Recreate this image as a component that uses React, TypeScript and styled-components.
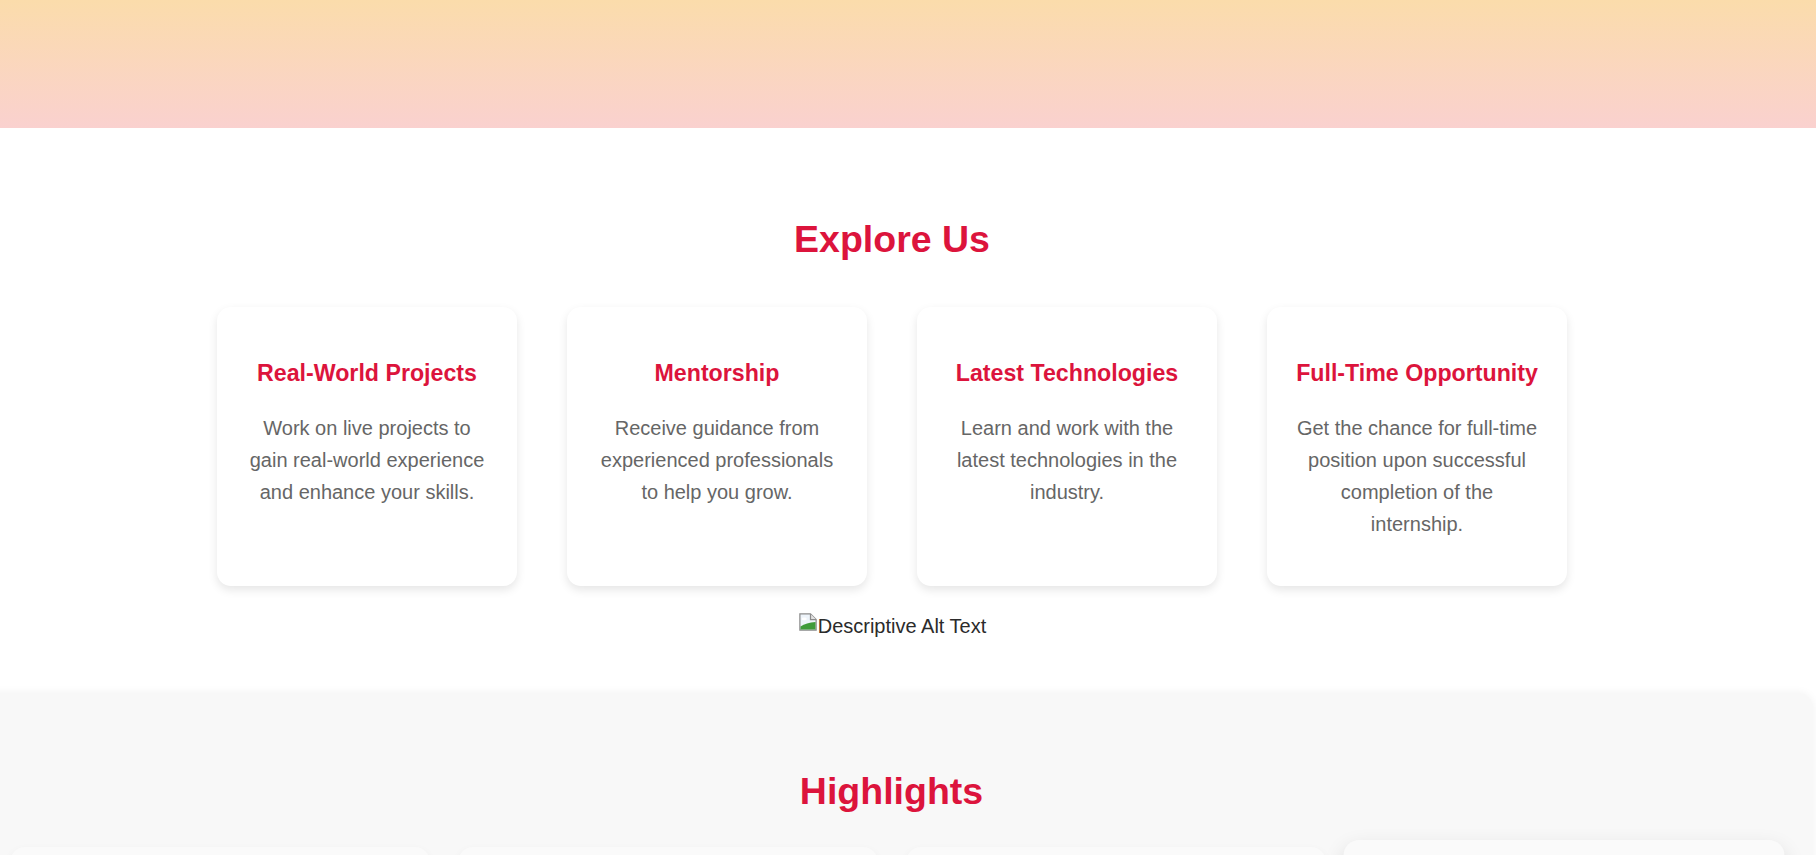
import React from "react";
import styled, { createGlobalStyle } from "styled-components";

const GlobalStyle = createGlobalStyle`
  html, body {
    margin: 0;
    padding: 0;
    overflow: hidden;
    background: #ffffff;
  }
  body {
    font-family: "Liberation Sans", Arial, sans-serif;
    color: #333333;
  }
  * { box-sizing: border-box; }
`;

const Page = styled.div`
  width: 1816px;
  display: flex;
  flex-direction: column;
`;

const HeroTail = styled.header`
  height: 128px;
  background: linear-gradient(to bottom, #fbdcab 0%, #fad1cf 100%);
`;

const ExploreSection = styled.section`
  width: 1784px;
  padding: 90px 0 55px;
  display: flex;
  flex-direction: column;
  align-items: center;
`;

const SectionTitle = styled.h2<{ $gap: number }>`
  margin: 0 0 ${(p) => p.$gap}px;
  font-size: 37.5px;
  line-height: 43px;
  font-weight: 700;
  color: #dc143c;
  text-align: center;
`;

const CardRow = styled.div`
  display: grid;
  grid-template-columns: repeat(4, 300px);
  gap: 50px;
  justify-content: center;
  align-items: stretch;
`;

const FeatureCard = styled.article`
  background: #ffffff;
  border-radius: 14px;
  box-shadow: 0 4px 10px rgba(0, 0, 0, 0.1);
  padding: 30px 25px 25px;
  text-align: center;
`;

const CardTitle = styled.h3`
  margin: 23px 0 26px;
  font-size: 23.2px;
  line-height: 26.4px;
  font-weight: 700;
  color: #dc143c;
`;

const CardText = styled.p`
  margin: 0 0 21px;
  font-size: 20px;
  line-height: 32px;
  color: #666666;
`;

const BrokenImage = styled.div`
  margin-top: 26px;
  display: flex;
  align-items: flex-end;
  font-size: 20px;
  line-height: 23px;
  color: #2b2b2b;
`;

const BrokenIcon = styled.svg`
  width: 20px;
  height: 20px;
  margin-bottom: 6px;
  flex: none;
`;

const HighlightsSection = styled.section`
  margin-left: -30px;
  width: 1843px;
  background: #f8f8f8;
  border-radius: 15px 15px 0 0;
  box-shadow: 0 0 10px rgba(0, 0, 0, 0.06);
  padding: 77px 0 40px;
  display: flex;
  flex-direction: column;
  align-items: center;
`;

const HighlightGrid = styled.div`
  display: grid;
  grid-template-columns: repeat(4, 420px);
  gap: 28px;
  justify-content: center;
`;

const HighlightCard = styled.div<{ $active?: boolean }>`
  height: 300px;
  background: #fafafa;
  border-radius: 15px;
  box-shadow: ${(p) =>
    p.$active ? "0 8px 20px rgba(0, 0, 0, 0.12)" : "0 4px 10px rgba(0, 0, 0, 0.06)"};
  transform-origin: center top;
  transform: ${(p) => (p.$active ? "translateY(-7px) scale(1.05)" : "none")};
`;

const features = [
  {
    title: "Real-World Projects",
    text: "Work on live projects to gain real-world experience and enhance your skills.",
  },
  {
    title: "Mentorship",
    text: "Receive guidance from experienced professionals to help you grow.",
  },
  {
    title: "Latest Technologies",
    text: "Learn and work with the latest technologies in the industry.",
  },
  {
    title: "Full-Time Opportunity",
    text: "Get the chance for full-time position upon successful completion of the internship.",
  },
];

export default function App() {
  return (
    <Page>
      <GlobalStyle />
      <HeroTail />
      <ExploreSection>
        <SectionTitle $gap={46}>Explore Us</SectionTitle>
        <CardRow>
          {features.map((f) => (
            <FeatureCard key={f.title}>
              <CardTitle>{f.title}</CardTitle>
              <CardText>{f.text}</CardText>
            </FeatureCard>
          ))}
        </CardRow>
        <BrokenImage role="img" aria-label="Descriptive Alt Text">
          <BrokenIcon viewBox="0 0 16 16">
            <path d="M1.5 1.5h8.5l4.5 4.5v8.5h-13z" fill="#eef4fa" stroke="#8c8c8c" />
            <path d="M10 1.5v4.5h4.5" fill="#e2e2e2" stroke="#8c8c8c" />
            <ellipse cx="5" cy="5.5" rx="2" ry="1.1" fill="#ffffff" />
            <path d="M2 14V11.5C5 9.5 9 8.5 14 8v6z" fill="#3f9b3a" />
          </BrokenIcon>
          <span>Descriptive Alt Text</span>
        </BrokenImage>
      </ExploreSection>
      <HighlightsSection>
        <SectionTitle $gap={34}>Highlights</SectionTitle>
        <HighlightGrid>
          <HighlightCard />
          <HighlightCard />
          <HighlightCard />
          <HighlightCard $active />
        </HighlightGrid>
      </HighlightsSection>
    </Page>
  );
}
